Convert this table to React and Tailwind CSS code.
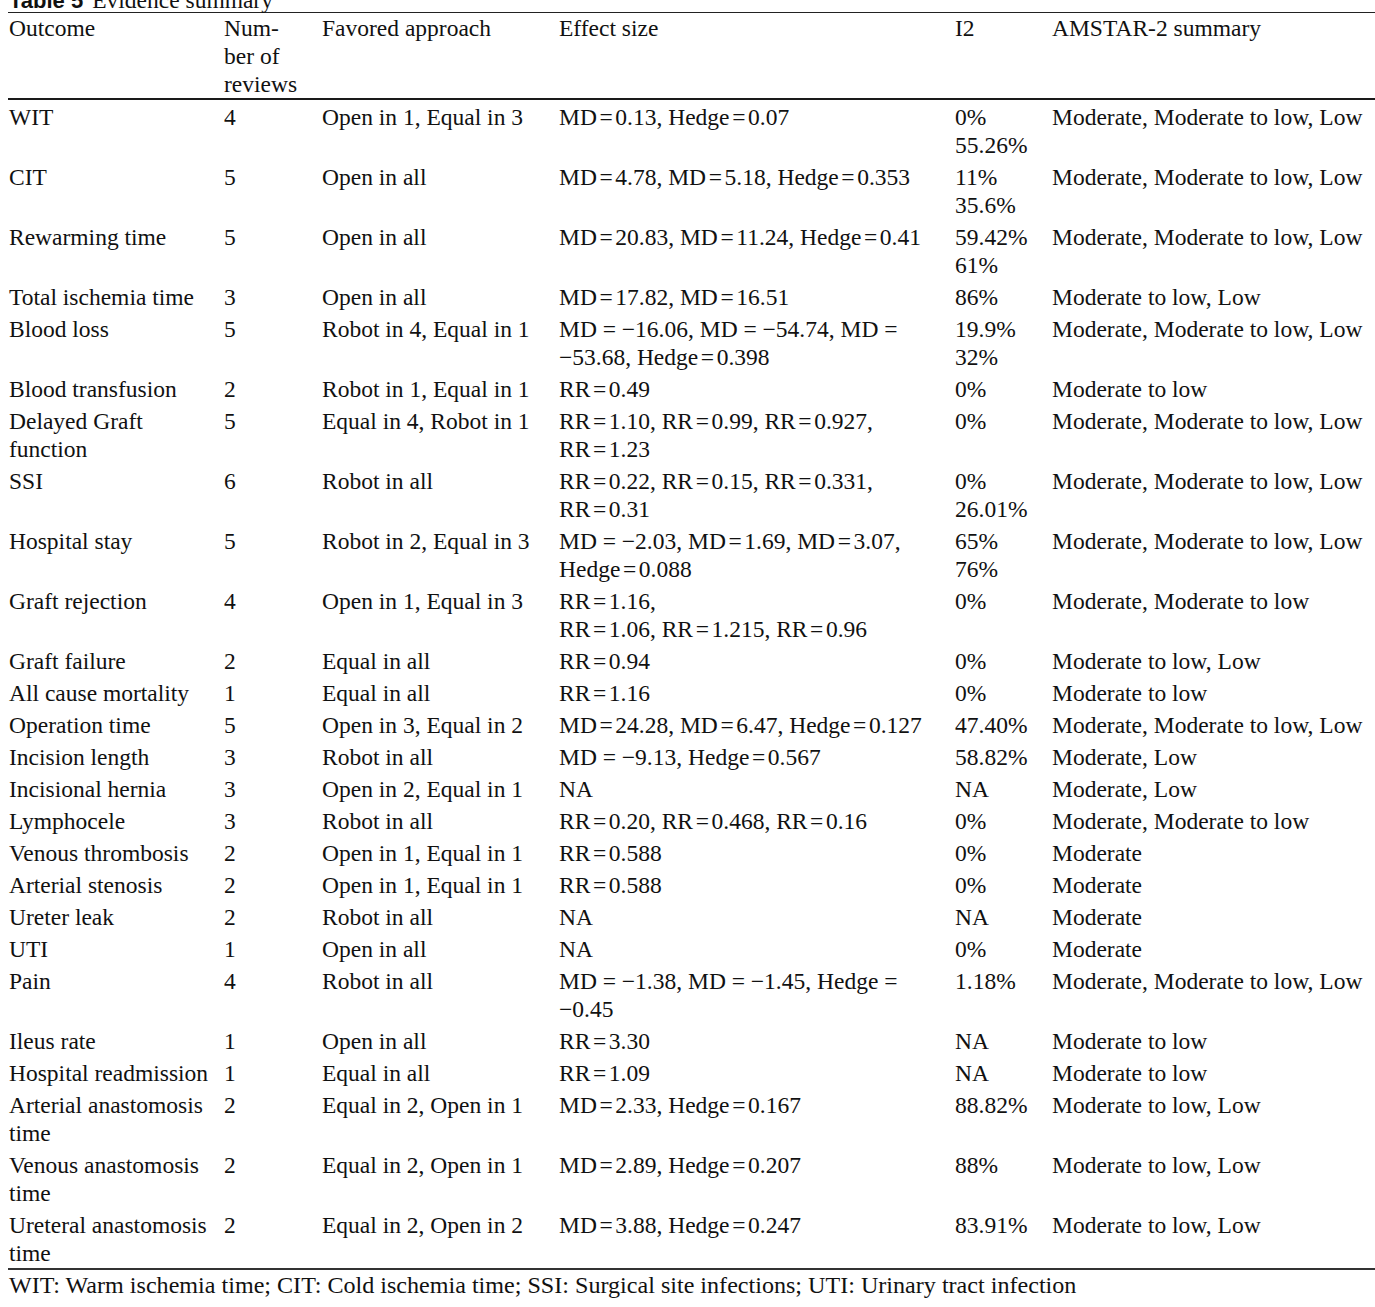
import React from 'react';

const rows = [
  ['WIT', '4', 'Open in 1, Equal in 3', ['MD=0.13, Hedge=0.07'], ['0%', '55.26%'], 'Moderate, Moderate to low, Low'],
  ['CIT', '5', 'Open in all', ['MD=4.78, MD=5.18, Hedge=0.353'], ['11%', '35.6%'], 'Moderate, Moderate to low, Low'],
  ['Rewarming time', '5', 'Open in all', ['MD=20.83, MD=11.24, Hedge=0.41'], ['59.42%', '61%'], 'Moderate, Moderate to low, Low'],
  ['Total ischemia time', '3', 'Open in all', ['MD=17.82, MD=16.51'], ['86%'], 'Moderate to low, Low'],
  ['Blood loss', '5', 'Robot in 4, Equal in 1', ['MD = −16.06, MD = −54.74, MD =', '−53.68, Hedge=0.398'], ['19.9%', '32%'], 'Moderate, Moderate to low, Low'],
  ['Blood transfusion', '2', 'Robot in 1, Equal in 1', ['RR=0.49'], ['0%'], 'Moderate to low'],
  [['Delayed Graft', 'function'], '5', 'Equal in 4, Robot in 1', ['RR=1.10, RR=0.99, RR=0.927,', 'RR=1.23'], ['0%'], 'Moderate, Moderate to low, Low'],
  ['SSI', '6', 'Robot in all', ['RR=0.22, RR=0.15, RR=0.331,', 'RR=0.31'], ['0%', '26.01%'], 'Moderate, Moderate to low, Low'],
  ['Hospital stay', '5', 'Robot in 2, Equal in 3', ['MD = −2.03, MD=1.69, MD=3.07,', 'Hedge=0.088'], ['65%', '76%'], 'Moderate, Moderate to low, Low'],
  ['Graft rejection', '4', 'Open in 1, Equal in 3', ['RR=1.16,', 'RR=1.06, RR=1.215, RR=0.96'], ['0%'], 'Moderate, Moderate to low'],
  ['Graft failure', '2', 'Equal in all', ['RR=0.94'], ['0%'], 'Moderate to low, Low'],
  ['All cause mortality', '1', 'Equal in all', ['RR=1.16'], ['0%'], 'Moderate to low'],
  ['Operation time', '5', 'Open in 3, Equal in 2', ['MD=24.28, MD=6.47, Hedge=0.127'], ['47.40%'], 'Moderate, Moderate to low, Low'],
  ['Incision length', '3', 'Robot in all', ['MD = −9.13, Hedge=0.567'], ['58.82%'], 'Moderate, Low'],
  ['Incisional hernia', '3', 'Open in 2, Equal in 1', ['NA'], ['NA'], 'Moderate, Low'],
  ['Lymphocele', '3', 'Robot in all', ['RR=0.20, RR=0.468, RR=0.16'], ['0%'], 'Moderate, Moderate to low'],
  ['Venous thrombosis', '2', 'Open in 1, Equal in 1', ['RR=0.588'], ['0%'], 'Moderate'],
  ['Arterial stenosis', '2', 'Open in 1, Equal in 1', ['RR=0.588'], ['0%'], 'Moderate'],
  ['Ureter leak', '2', 'Robot in all', ['NA'], ['NA'], 'Moderate'],
  ['UTI', '1', 'Open in all', ['NA'], ['0%'], 'Moderate'],
  ['Pain', '4', 'Robot in all', ['MD = −1.38, MD = −1.45, Hedge =', '−0.45'], ['1.18%'], 'Moderate, Moderate to low, Low'],
  ['Ileus rate', '1', 'Open in all', ['RR=3.30'], ['NA'], 'Moderate to low'],
  ['Hospital readmission', '1', 'Equal in all', ['RR=1.09'], ['NA'], 'Moderate to low'],
  [['Arterial anastomosis', 'time'], '2', 'Equal in 2, Open in 1', ['MD=2.33, Hedge=0.167'], ['88.82%'], 'Moderate to low, Low'],
  [['Venous anastomosis', 'time'], '2', 'Equal in 2, Open in 1', ['MD=2.89, Hedge=0.207'], ['88%'], 'Moderate to low, Low'],
  [['Ureteral anastomosis', 'time'], '2', 'Equal in 2, Open in 2', ['MD=3.88, Hedge=0.247'], ['83.91%'], 'Moderate to low, Low'],
];

// tight "=" (no spaces around) gets a little air, as in the typeset table
const Eq = ({ text }) => {
  const parts = text.split(/(?<! )=(?! )/);
  return parts.map((p, i) => (
    <React.Fragment key={i}>
      {p}
      {i < parts.length - 1 && <span className="mx-[2.6px]">=</span>}
    </React.Fragment>
  ));
};

const Lines = ({ value }) => {
  const list = Array.isArray(value) ? value : [value];
  return list.map((l, i) => (
    <div key={i} className="whitespace-nowrap">
      <Eq text={l} />
    </div>
  ));
};

const grid = 'grid grid-cols-[215px_98px_237px_396px_97px_1fr]';

export default function App() {
  return (
    <div className="bg-white text-[#111] font-['Liberation_Serif','Times_New_Roman',serif] text-[23.5px] leading-[28px] overflow-hidden h-[1307px]">
      <div className="pl-[9px] h-[26px] mt-[-14px] whitespace-nowrap">
        <span className="font-['Liberation_Sans',Arial,sans-serif] font-bold text-[22px]">Table 5</span>
        <span className="ml-[9px]">Evidence summary</span>
      </div>

      <div className="ml-[8px]">
        <div className="h-px bg-[#222]" />
        <div className={`${grid} pt-[1px]`}>
          <div className="pl-[1px]">Outcome</div>
          <div className="pl-[1px]">
            Num-
            <br />
            ber of
            <br />
            reviews
          </div>
          <div className="pl-[1px]">Favored approach</div>
          <div className="pl-[1px]">Effect size</div>
          <div className="pl-[1px]">I2</div>
          <div className="pl-[1px]">AMSTAR-2 summary</div>
        </div>
        <div className="h-[2px] bg-[#1a1a1a]" />

        {rows.map((r, i) => (
          <div key={i} className={`${grid} pt-[3px] pb-[1px]`}>
            <div className="pl-[1px]">
              <Lines value={r[0]} />
            </div>
            <div className="pl-[1px]">{r[1]}</div>
            <div className="pl-[1px] whitespace-nowrap">{r[2]}</div>
            <div className="pl-[1px]">
              <Lines value={r[3]} />
            </div>
            <div className="pl-[1px]">
              <Lines value={r[4]} />
            </div>
            <div className="pl-[1px] whitespace-nowrap">{r[5]}</div>
          </div>
        ))}

        <div className="h-[2px] bg-[#333]" />
        <div className="pl-[1px] pt-[1px] whitespace-nowrap text-[24.1px]">
          WIT: Warm ischemia time; CIT: Cold ischemia time; SSI: Surgical site infections; UTI: Urinary tract infection
        </div>
      </div>
    </div>
  );
}
